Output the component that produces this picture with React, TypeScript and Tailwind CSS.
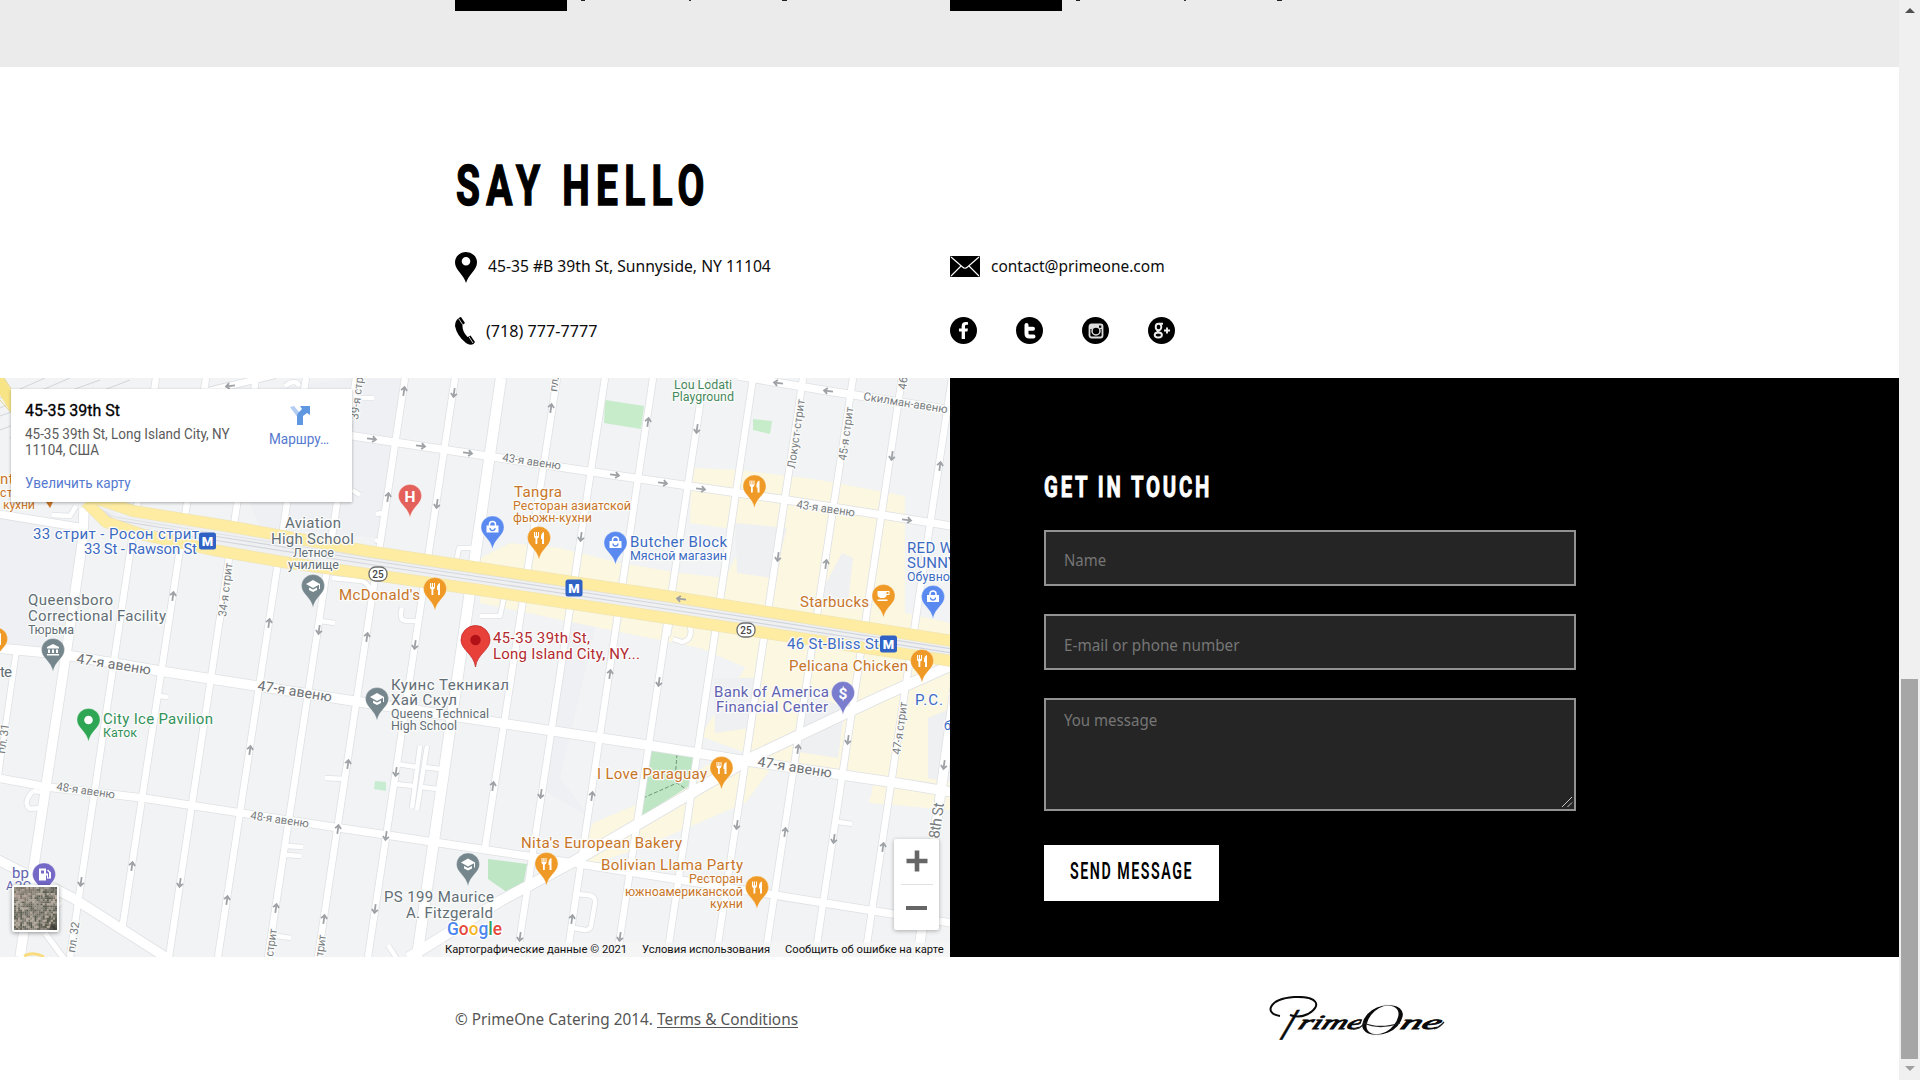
import React, { useLayoutEffect, useRef, useState } from "react";
import { FaFacebookF } from "react-icons/fa";

/** Condenses its text horizontally so that it fills the width of its box. */
function Fit({ className, textClass = "", children }: { className: string; textClass?: string; children: React.ReactNode }) {
  const box = useRef<HTMLSpanElement>(null);
  const inner = useRef<HTMLSpanElement>(null);
  const [scale, setScale] = useState(1);
  useLayoutEffect(() => {
    if (box.current && inner.current) setScale(box.current.offsetWidth / inner.current.offsetWidth);
  }, []);
  return (
    <span ref={box} className={"block shrink-0 whitespace-nowrap " + className}>
      <span ref={inner} className={"inline-block origin-left " + textClass} style={{ transform: `scaleX(${scale})` }}>
        {children}
      </span>
    </span>
  );
}

const ORANGE = "#c87528";
const SLATE = "#626e76";
const BLUE = "#3c6bc4";
const VIOLET = "#6163b2";
const GREEN = "#33925a";

type Road = [string, number];
const ROADS: Road[] = [
  ["M16 275L-2 400", 5],
  ["M84 130L83 160L65 283L20 579", 9],
  ["M156 0L70 579", 6],
  ["M206 0L122 552", 6],
  ["M256 0L169 579", 6],
  ["M306 0L218 579", 6],
  ["M356 0L268 579", 6],
  ["M405 0L318 579", 6],
  ["M455 0L368 579", 6],
  ["M501 0L417 579", 10],
  ["M557 0L485 470", 6],
  ["M605 0L517 579", 6],
  ["M653 0L567 579", 6],
  ["M704 0L617 579", 6],
  ["M753 0L667 579", 6],
  ["M803 0L716 579", 6],
  ["M853 0L765 579", 6],
  ["M902 0L815 579", 6],
  ["M952 0L865 579", 6],
  ["M998 0L918 579", 9],
  ["M200 15L275 -3", 6],
  ["M738 -2L828 13L952 32", 7],
  ["M340 56L420 68L480 77L613 97L787 122L952 148", 7],
  ["M-2 136L84 150", 7],
  ["M-2 270L60 276L160 293L360 324L480 342L647 367L747 383L897 405L952 414", 9],
  ["M-2 400L47 409L143 420L333 449L480 471L580 486L680 502L893 536L952 545", 7],
  ["M-2 482L73 520L170 582", 9],
  ["M952 287L880 319L753 379L573 484L500 523L408 580", 10],
  ["M60 524L48 540M45 555L65 582", 5],
  ["M33 413Q22 425 30 431L40 430M33 413L42 414", 4],
  ["M52 137L70 138L76 128", 4],
  ["M160 318L168 319", 4],
  ["M325 400L345 401", 4],
  ["M286 468L303 469M286 477L301 478M277 558L291 560", 4],
  ["M332 200L362 203Q370 206 370 215M320 243L335 245", 4],
  ["M402 230Q398 243 407 243L416 243", 4],
  ["M375 162L382 164M376 136L383 135M457 180L459 170L475 170M352 112L360 117", 4],
  ["M420 368L412 430M427 368L417 432M398 386L416 389M424 389L440 391M395 406L414 408M421 409L438 411", 4],
  ["M355 20L374 20M285 8Q296 0 299 8", 4],
  ["M576 516L588 517Q596 518 595 525L591 548Q590 552 585 552L574 550", 4],
  ["M480 238L500 238L504 220M670 246L668 258M690 248Q693 262 682 264L673 261", 4],
  ["M388 567L397 581M838 444L852 446", 4],
];

const ARROWS: [number, number, number][] = [
  [404, 13, 8], [454, 15, 188], [230, 8, 262], [372, 61, 98], [421, 68, 98], [468, 75, 98],
  [388, 119, 8], [437, 126, 188], [173, 218, 8], [269, 245, 8], [319, 252, 188], [367, 259, 8], [415, 267, 188],
  [551, 30, 8], [648, 44, 8], [697, 51, 188], [778, 5, 278], [828, 13, 278], [892, 78, 188], [940, 88, 8],
  [615, 97, 98], [663, 105, 98], [701, 111, 98], [907, 142, 98], [581, 159, 188], [778, 179, 188], [826, 186, 8],
  [681, 221, 278], [610, 296, 8], [659, 304, 188], [250, 372, 8], [348, 386, 8], [396, 394, 188],
  [132, 488, 8], [81, 504, 188], [180, 505, 188], [227, 522, 8], [338, 451, 8], [386, 458, 188],
  [276, 530, 8], [324, 541, 8], [375, 531, 188], [493, 408, 8], [541, 416, 188], [592, 418, 8],
  [737, 447, 188], [785, 454, 8], [798, 371, 8], [848, 362, 188], [834, 461, 188], [883, 469, 8],
  [944, 387, 188], [572, 541, 8], [520, 559, 188], [620, 559, 188],
];

// text, x, baseline, length, size, colour, rotation
type Label = [string, number, number, number, number, string, number?];
const LABELS: Label[] = [
  ["Lou Lodati", 674, 10.5, 58, 12.5, "#45885c"],
  ["Playground", 672, 23, 62, 12.5, "#45885c"],
  ["Aviation", 285, 150, 56, 15, SLATE],
  ["High School", 271, 166, 83, 15, SLATE],
  ["Летное", 293, 179, 41, 12.5, SLATE],
  ["училище", 288, 191, 51, 12.5, SLATE],
  ["McDonald's", 339, 222, 81, 15, ORANGE],
  ["Queensboro", 28, 227, 85, 15, SLATE],
  ["Correctional Facility", 28, 242.5, 138, 15, SLATE],
  ["Тюрьма", 28, 256, 46, 12.5, SLATE],
  ["33 стрит - Росон стрит", 33, 161, 166, 15, BLUE],
  ["33 St - Rawson St", 84, 176, 113, 15, BLUE],
  ["Tangra", 514, 119, 48, 15, ORANGE],
  ["Ресторан азиатской", 513, 132, 118, 12.5, ORANGE],
  ["фьюжн-кухни", 513, 144, 79, 12.5, ORANGE],
  ["Butcher Block", 630, 169, 97, 15, BLUE],
  ["Мясной магазин", 630, 182, 97, 12.5, BLUE],
  ["Starbucks", 800, 228.5, 69, 15, ORANGE],
  ["RED W", 907, 175, 46, 15, BLUE],
  ["SUNNY", 907, 190, 50, 15, BLUE],
  ["Обувно", 907, 203, 43, 12.5, BLUE],
  ["46 St-Bliss St", 787, 271, 92, 15, BLUE],
  ["Pelicana Chicken", 789, 293, 119, 15, ORANGE],
  ["45-35 39th St,", 493, 265, 97, 15, "#b32930"],
  ["Long Island City, NY...", 493, 281, 147, 15, "#b32930"],
  ["Bank of America", 714, 319, 115, 15, VIOLET],
  ["Financial Center", 716, 334, 112, 15, VIOLET],
  ["P.C. R", 915, 327, 43, 15, BLUE],
  ["б", 944, 352, 7, 12.5, BLUE],
  ["I Love Paraguay", 597, 401, 110, 15, ORANGE],
  ["Nita's European Bakery", 521, 470, 161, 15, ORANGE],
  ["Bolivian Llama Party", 601, 492, 142, 15, ORANGE],
  ["Ресторан", 689, 505, 54, 12.5, ORANGE],
  ["южноамериканской", 625, 518, 118, 12.5, ORANGE],
  ["кухни", 710, 530, 33, 12.5, ORANGE],
  ["PS 199 Maurice", 384, 524, 110, 15, SLATE],
  ["A. Fitzgerald", 406, 539.5, 87, 15, SLATE],
  ["City Ice Pavilion", 103, 346, 110, 15, GREEN],
  ["Каток", 103, 359, 34, 12.5, GREEN],
  ["Куинс Текникал", 391, 311.5, 118, 15, SLATE],
  ["Хай Скул", 391, 327, 66, 15, SLATE],
  ["Queens Technical", 391, 340, 98, 12.5, SLATE],
  ["High School", 391, 352, 66, 12.5, SLATE],
  ["bp", 12, 500, 17, 15, VIOLET],
  ["АЗС", 6, 512, 25, 12.5, VIOLET],
  ["te", 0, 299, 12, 15, SLATE],
  ["nte", 0, 106, 22, 15, ORANGE],
  ["сто", 0, 119, 20, 12.5, ORANGE],
  ["кухни", 3, 131, 32, 12.5, ORANGE],
  ["43-я авеню", 502, 83, 59, 11.5, "#777b80", 8.5],
  ["43-я авеню", 796, 130, 59, 11.5, "#777b80", 8.5],
  ["47-я авеню", 76, 285, 75, 14, "#6c7075", 9],
  ["47-я авеню", 257, 312, 75, 14, "#6c7075", 9],
  ["47-я авеню", 757, 388, 75, 14, "#6c7075", 9],
  ["48-я авеню", 56, 412, 59, 11.5, "#777b80", 8.5],
  ["48-я авеню", 250, 441, 59, 11.5, "#777b80", 8.5],
  ["Скилман-авеню", 863, 22, 85, 11.5, "#777b80", 9],
  ["34-я стрит", 226, 239, 54, 11.5, "#777b80", -83],
  ["39-я стр", 358, 42, 43, 11.5, "#777b80", -83],
  ["пл.", 557, 14, 15, 11.5, "#777b80", -83],
  ["Локуст-стрит", 795, 91, 70, 11.5, "#777b80", -82],
  ["45-я стрит", 846, 83, 54, 11.5, "#777b80", -82],
  ["46", 906, 12, 13, 11.5, "#777b80", -83],
  ["47-я стрит", 900, 377, 53, 11.5, "#777b80", -82],
  ["8th St", 939, 461, 36, 15, "#777b80", -82],
  ["пл. 31", 5, 376, 30, 11.5, "#777b80", -82],
  ["пл. 32", 75, 575, 31, 11.5, "#777b80", -82],
  ["стрит", 273, 579, 28, 11.5, "#777b80", -82],
  ["трит", 323, 579, 22, 11.5, "#777b80", -82],
];

type PinKind = "food" | "bag" | "school" | "cup" | "bank" | "dollar" | "dot" | "H" | "gas";
const PINS: [PinKind, number, number, string][] = [
  ["H", 410, 118, "#e4605a"],
  ["school", 313, 208, "#75868d"],
  ["food", 435, 211, "#ef9a26"],
  ["bank", 53, 272, "#75868d"],
  ["food", -4, 261, "#ef9a26"],
  ["bag", 492.5, 149.500, "#5a8af0"],
  ["food", 539, 160, "#ef9a26"],
  ["bag", 615.500, 165, "#5a8af0"],
  ["food", 754.500, 108.500, "#ef9a26"],
  ["cup", 883.500, 218, "#ef9a26"],
  ["bag", 933, 219, "#5a8af0"],
  ["food", 922, 283, "#ef9a26"],
  ["dollar", 843, 315, "#7a7ccd"],
  ["food", 721.500, 390, "#ef9a26"],
  ["food", 546.500, 486, "#ef9a26"],
  ["food", 757, 509.500, "#ef9a26"],
  ["dot", 88.500, 342, "#2fa653"],
  ["school", 377, 321, "#75868d"],
  ["school", 468, 486.500, "#75868d"],
  ["gas", 44, 496.500, "#7469c7"],
];

function PinGlyph({ kind }: { kind: PinKind }) {
  switch (kind) {
    case "food":
      return <path d="M-5 -6V-2Q-5 0 -3.500 0.500V6H-1.700V0.500Q0 0 0 -2V-6H-1V-2H-2V-6H-3.200V-2H-4V-6ZM5 -6Q1.500 -5 2 1H3V6H5Z" fill="#fff" />;
    case "bag":
      return (
        <g fill="none" stroke="#fff">
          <path d="M-3 -1V-3A3 3 0 0 1 3 -3V-1" strokeWidth="1.500" />
          <path d="M-6 -2H6V5H-6Z" fill="#fff" stroke="none" />
          <path d="M-2.500 0.500A2.500 2.500 0 0 0 2.500 0.500" stroke="#5a8af0" strokeWidth="1.300" />
        </g>
      );
    case "school":
      return <path d="M0 -6L-7 -2L0 2L6 -1.300V3H7V-2ZM-4 1.500V4L0 6L4 4V1.500L0 3.600Z" fill="#fff" />;
    case "bank":
      return <path d="M0 -6L-6 -3V-1.500H6V-3ZM-5 -0.500H-3V3H-5ZM-1 -0.500H1V3H-1ZM3 -0.500H5V3H3ZM-6 4H6V5.500H-6Z" fill="#fff" />;
    case "cup":
      return <path d="M-6 -5H6V-1H3V0Q2 2 0 2H-3Q-6 1 -6 -1ZM3 -4V-2H5V-4ZM-6 3.500H4V5H-6Z" fill="#fff" fillRule="evenodd" />;
    case "dot":
      return <circle r="4.300" fill="#fff" />;
    case "gas":
      return <path d="M-5 -6H2V-1H4V3H5V-2L3 -4L4 -5L7 -2V4H3V1H2V6H-5ZM-3 -4V-1H0V-4Z" fill="#fff" fillRule="evenodd" />;
    default:
      return (
        <text y="5.500" textAnchor="middle" fontSize="15.500" fontWeight="700" fill="#fff">
          {kind === "H" ? "H" : "$"}
        </text>
      );
  }
}

function MapDrawing() {
  return (
    <svg viewBox="0 0 950 579" className="block h-[579px] w-[950px] font-[Roboto,sans-serif]">
      <rect width="950" height="579" fill="#f1f3f4" />
      <path d="M210 20L350 0H405L380 160L260 150ZM570 240L600 230L560 400L590 440L540 410ZM0 140L80 155L60 270L0 265Z" fill="#eceef2" opacity=".6" />
      {/* commercial areas */}
      <g fill="#fcf7e1">
        <path d="M692 90L740 92L820 102L905 118L905 235L950 245V432L868 424L880 400L750 380L800 330L770 300L700 270L600 250L480 225V180L510 165L560 170L620 185L680 195L725 200L735 180L760 155L690 145Z" />
        <path d="M700 358L745 290L800 300L952 270V432L870 425L875 395L760 380Z" />
        <path d="M593 445L640 425L720 380L770 392L745 425L640 470L575 492Z" />
      </g>
      <path d="M735 145L787 150L774 200L737 195ZM842 175L853 180L848 225L818 220ZM714 300L760 300L750 350L715 355ZM810 315L845 330L838 380L798 374ZM928 340L952 330V405L928 400Z" fill="#eff0f1" />
      {/* parks */}
      <path d="M605 22L644 28L641 51L604 45ZM753 41L772 43L770 56L753 52Z" fill="#c6ecc9" />
      <path d="M649 371L694 378L689 408L642 438ZM488 481L527 486L523 508L508 515L488 501Z" fill="#bee6c4" />
      <path d="M375 403L386 404L386 413L374 411Z" fill="#c8ecd2" />
      <path d="M677 376L675 402M643 420L677 405L689 413" fill="none" stroke="#74937b" strokeDasharray="4 2" />
      {/* rail yard */}
      <path d="M0 30L70 0M0 38L100 2M0 52L130 2M0 20L45 0M10 60L230 4" stroke="#d3d5d8" fill="none" />
      {/* streets */}
      <g fill="none" strokeLinejoin="round">
        {ROADS.map(([d, w], i) => (
          <path key={i} d={d} stroke="#dfe1e4" strokeWidth={w + 2} />
        ))}
        {ROADS.map(([d, w], i) => (
          <path key={i} d={d} stroke="#fff" strokeWidth={w + 0.4} />
        ))}
        {/* boulevard and elevated line */}
        <path d="M92 126L115 145L213 160L367 184L480 201L680 231L952 273" stroke="#eff0f2" strokeWidth="17" />
        <path d="M92 126L115 142L213 158L367 182L480 199L680 229L952 271M92 126L115 147L213 162L367 186L480 203L680 233L952 275" stroke="#d2d6dc" strokeWidth="1.200" />
        <path d="M92 126L115 139L213 155L367 179L480 196L680 226L952 268" stroke="#dfe1e4" />
        <path d="M92 119L133 133L233 149L367 173L480 190L680 220L952 263M86 124L106 144L140 156L213 172L283 184L480 212L680 242L952 283" stroke="#f1e5b4" strokeWidth="12" />
        <path d="M92 119L133 133L233 149L367 173L480 190L680 220L952 263M86 124L106 144L140 156L213 172L283 184L480 212L680 242L952 283" stroke="#fdeca2" strokeWidth="10.500" />
        <path d="M-6 -4L20 38" stroke="#f7e486" strokeWidth="12" />
        <path d="M-2 20L18 42M4 0L24 30" stroke="#e5d48a" />
        <path d="M24 578Q34 573 44 579" stroke="#f8dc7d" strokeWidth="3" />
      </g>
      {ARROWS.map(([x, y, a], i) => (
        <path key={i} d="M0 5V-3M-3 -0.500L0 -4L3 -0.500" fill="none" stroke="#9ea1a5" strokeWidth="1.800" transform={`translate(${x} ${y}) rotate(${a})`} />
      ))}
      {LABELS.map(([t, x, y, len, size, color, rot], i) => (
        <text
          key={i}
          transform={`translate(${x} ${y}) rotate(${rot ?? 0})`}
          fontSize={size}
          textLength={len}
          fill={color}
          stroke="#fbfbfa"
          strokeWidth="2.600"
          strokeLinejoin="round"
          paintOrder="stroke"
        >
          {t}
        </text>
      ))}
      {[[378, 196], [746, 252]].map(([x, y]) => (
        <g key={x} transform={`translate(${x} ${y})`}>
          <rect x="-9" y="-7" width="18" height="14" rx="6.500" fill="#fff" stroke="#6d6d6d" strokeWidth="1.300" />
          <text y="3.700" textAnchor="middle" fontSize="10" fontWeight="500" fill="#444">25</text>
        </g>
      ))}
      {[[207.500, 163], [574, 210], [888.500, 266]].map(([x, y]) => (
        <g key={x} transform={`translate(${x} ${y})`}>
          <rect x="-8.500" y="-8.500" width="17" height="17" rx="2.500" fill="#2f62c4" />
          <text y="4.800" textAnchor="middle" fontSize="13" fontWeight="900" fill="#fff">M</text>
        </g>
      ))}
      <path d="M46 124L50 130L53 124Z" fill={ORANGE} />
      {PINS.map(([kind, x, y, color], i) => (
        <g key={i} transform={`translate(${x} ${y})`}>
          <path d="M0 21.500C-2 11 -11.500 8 -11.500 0A11.500 11.500 0 0 1 11.500 0C11.500 8 2 11 0 21.500Z" fill={color} stroke="#fff" strokeOpacity=".5" strokeWidth=".6" />
          <PinGlyph kind={kind} />
        </g>
      ))}
      <path d="M475.500 289C474 276 461 272 461 262A14.500 14.500 0 0 1 490 262C490 272 477 276 475.500 289Z" fill="#e8413a" stroke="#c5282a" strokeWidth=".8" />
      <circle cx="475.500" cy="262" r="5.200" fill="#b01217" />
      <text x="447" y="556.500" fontSize="18.500" fontWeight="500" textLength="55" lengthAdjust="spacingAndGlyphs" stroke="#fff" strokeWidth="2.500" paintOrder="stroke">
        <tspan fill="#4a86ee">G</tspan>
        <tspan fill="#e5493d">o</tspan>
        <tspan fill="#f3b724">o</tspan>
        <tspan fill="#4a86ee">g</tspan>
        <tspan fill="#35a355">l</tspan>
        <tspan fill="#e5493d">e</tspan>
      </text>
      <rect x="441" y="564" width="509" height="15" fill="#f5f5f5" opacity=".75" />
    </svg>
  );
}

const SAT_TONES = ["#8d877b", "#6c6a60", "#a59c8f", "#575a4d", "#7c7b70", "#b5a99c", "#666358"];

function Satellite() {
  const cells = [];
  for (let r = 0; r < 21; r++) {
    for (let c = 0; c < 21; c++) {
      const n = (r * 37 + c * 91 + r * c * 13 + ((r * r) % 11) * 5 + ((c * c * c) % 17)) % SAT_TONES.length;
      cells.push(<rect key={`${r}-${c}`} x={c * 2} y={r * 2} width="2.200" height="2.200" fill={SAT_TONES[n]} />);
    }
  }
  return (
    <svg viewBox="0 0 42 42" className="h-full w-full">
      {cells}
      <path d="M0 0H24L12 16L0 10Z" fill="#b59f93" opacity=".35" />
      <path d="M8 42L14 0M22 42L27 0M35 42L40 0M0 12L42 18M0 32L42 37" stroke="#b5ab9e" strokeWidth=".7" opacity=".7" />
      <path d="M36 36H42V42H34Z" fill="#33352e" opacity=".7" />
    </svg>
  );
}

function MapPanel() {
  return (
    <div className="relative h-[579px] w-[950px] shrink-0 overflow-hidden font-[Roboto,sans-serif]">
      <MapDrawing />
      <div className="absolute left-[11px] top-[11px] flex h-[113px] w-[341px] bg-white pl-[14px] shadow-[0_1px_3px_rgba(0,0,0,0.3)]">
        <div className="flex w-[240px] flex-col">
          <Fit className="mt-[12px] h-5 w-[95px] text-[16px] leading-5 text-black" textClass="[-webkit-text-stroke:0.3px_black]">45-35 39th St</Fit>
          <Fit className="mt-[5px] h-4 w-[205px] text-[14px] leading-4 text-[#5b5b5b]">45-35 39th St, Long Island City, NY</Fit>
          <Fit className="h-4 w-[74px] text-[14px] leading-4 text-[#5b5b5b]">11104, США</Fit>
          <Fit className="mt-[17px] h-4 w-[106px] text-[14px] leading-4 text-[#5579cf]">Увеличить карту</Fit>
        </div>
        <div className="flex flex-1 flex-col pl-[4px]">
          <svg viewBox="0 0 20 20" className="mt-[16px] ml-[21px] h-5 w-5">
            <path d="M0 2L4 1L10 8L8 13Z" fill="#b4cdf2" />
            <path d="M7 20V11Q7 9 9 7L12 4L10 1H20V10L17 8L13 11V20Z" fill="#5f98e0" />
          </svg>
          <Fit className="mt-[6px] h-4 w-[60px] text-[14px] leading-4 text-[#5579cf]">Маршру…</Fit>
        </div>
      </div>
      <div className="absolute left-[12px] top-[507px] h-[47px] w-[47px] rounded-[2px] border-[2px] border-white bg-white shadow-[0_1px_4px_rgba(0,0,0,0.4)]">
        <Satellite />
      </div>
      <div className="absolute left-[894px] top-[461px] flex h-[91px] w-[45px] flex-col items-center rounded-[2px] bg-white shadow-[0_1px_4px_rgba(0,0,0,0.3)]">
        <svg viewBox="0 0 22 22" className="mt-[11px] h-[22px] w-[22px]">
          <path d="M8.700 0.500H13.300V8.700H21.500V13.300H13.300V21.500H8.700V13.300H0.500V8.700H8.700Z" fill="#666" />
        </svg>
        <div className="mt-[12px] h-px w-[32px] bg-[#e0e0e0]" />
        <div className="mt-[21px] h-[4px] w-[21px] bg-[#666]" />
      </div>
      <div className="absolute left-[445px] top-[565px] flex h-[14px] gap-[15px] text-[11px] leading-[14px] text-[#111]">
        <Fit className="w-[182px]">Картографические данные © 2021</Fit>
        <Fit className="w-[128px]">Условия использования</Fit>
        <Fit className="w-[159px]">Сообщить об ошибке на карте</Fit>
      </div>
    </div>
  );
}

function ContactForm() {
  return (
    <div className="flex flex-1 flex-col items-start bg-black pt-[95px] pl-[94px]">
      <Fit
        className="h-[29px] w-[168px] font-[Roboto,sans-serif] text-[29px] leading-[29px] font-bold tracking-[4px] text-white"
        textClass="[-webkit-text-stroke:0.9px_white]"
      >
        GET IN TOUCH
      </Fit>
      <div className="mt-[28px] h-[56px] w-[532px] border-2 border-[#929292] bg-[#252525] pt-[16px] pl-[18px]">
        <Fit className="h-6 w-[42px] text-[16px] leading-6 text-[#757575]">Name</Fit>
      </div>
      <div className="mt-[28px] h-[56px] w-[532px] border-2 border-[#929292] bg-[#252525] pt-[17px] pl-[18px]">
        <Fit className="h-6 w-[176px] text-[16px] leading-6 text-[#757575]">E-mail or phone number</Fit>
      </div>
      <div className="mt-[28px] flex h-[113px] w-[532px] items-end justify-between border-2 border-[#929292] bg-[#252525] pl-[18px]">
        <Fit className="mb-auto mt-[8px] h-6 w-[93px] text-[16px] leading-6 text-[#757575]">You message</Fit>
        <svg viewBox="0 0 12 12" className="mr-px mb-px h-3 w-3">
          <path d="M1 11L11 1M6.500 11L11 6.500" stroke="#c8c8c8" />
        </svg>
      </div>
      <button className="mt-[34px] flex h-[56px] w-[175px] items-center bg-white pb-[3px] pl-[26px]">
        <Fit className="h-[23px] w-[123px] text-left font-[Roboto,sans-serif] text-[23px] leading-[23px] font-semibold tracking-[2.500px] text-black">
          SEND MESSAGE
        </Fit>
      </button>
    </div>
  );
}

function SocialIcons() {
  return (
    <div className="flex gap-[39px] pb-px text-white">
      <span className="flex h-[27px] w-[27px] items-center justify-center rounded-full bg-black">
        <FaFacebookF size={17} />
      </span>
      <span className="flex h-[27px] w-[27px] items-center justify-center rounded-full bg-black">
        <svg viewBox="0 0 27 27" className="h-[27px] w-[27px]">
          <path d="M10.500 8V16.500Q10.500 19.500 13.500 19.500H17.500M10.500 11.700H17" fill="none" stroke="#fff" strokeWidth="4" strokeLinecap="round" strokeLinejoin="round" />
        </svg>
      </span>
      <span className="flex h-[27px] w-[27px] items-center justify-center rounded-full bg-black">
        <svg viewBox="0 0 16 16" className="h-4 w-4">
          <rect x="1.500" y="1.500" width="13" height="13" rx="2" fill="none" stroke="#ddd" strokeWidth="1.800" />
          <path d="M1 3Q1 1 3 1H13Q15 1 15 3V6H1Z" fill="#ddd" />
          <circle cx="8" cy="8" r="4" fill="#000" stroke="#ddd" strokeWidth="1.500" />
          <rect x="11" y="2.500" width="2.300" height="2.300" fill="#000" />
        </svg>
      </span>
      <span className="flex h-[27px] w-[27px] items-center justify-center rounded-full bg-black">
        <svg viewBox="0 0 27 27" className="h-[27px] w-[27px]">
          <g fill="none" stroke="#eee" strokeWidth="1.900">
            <ellipse cx="10.500" cy="10" rx="2.800" ry="3.200" />
            <ellipse cx="10.300" cy="18" rx="3.600" ry="2.500" />
            <path d="M10 13Q8.500 14.500 11.500 15.700M11 6.800H15" />
            <path d="M16 13.500H22M19 10.500V16.500" />
          </g>
        </svg>
      </span>
    </div>
  );
}

function ContactInfo() {
  return (
    <section className="h-[311px] bg-white pt-[91px] pl-[455px] text-[#0c0c0c]">
      <Fit
        className="h-14 w-[255px] pl-px font-[Roboto,sans-serif] text-[56px] leading-[56px] font-bold tracking-[9px] text-black"
        textClass="[-webkit-text-stroke:1.500px_black]"
      >
        SAY HELLO
      </Fit>
      <div className="mt-[33px] flex h-[38px]">
        <div className="flex w-[495px] items-center">
          <svg viewBox="0 0 22 31" className="mt-[2px] h-[31px] w-[22px]">
            <path fillRule="evenodd" d="M11 31C9 23 0 18 0 10.500A11 10.500 0 0 1 22 10.500C22 18 13 23 11 31ZM11 5A4.300 4.300 0 1 0 11 13.600A4.300 4.300 0 1 0 11 5Z" />
          </svg>
          <Fit className="ml-[11px] w-[283px] text-[16px] leading-6">45-35 #B 39th St, Sunnyside, NY 11104</Fit>
        </div>
        <div className="flex items-center">
          <svg viewBox="0 0 30 21" className="mt-px h-[21px] w-[30px]">
            <rect width="30" height="21" rx="1" />
            <path d="M1 1L12.500 11Q15 13.500 17.500 11L29 1M1 20L11 10M29 20L19 10" fill="none" stroke="#fff" strokeWidth="1.100" />
          </svg>
          <Fit className="ml-[11px] w-[174px] text-[16px] leading-6">contact@primeone.com</Fit>
        </div>
      </div>
      <div className="mt-[27px] flex h-[38px]">
        <div className="flex w-[495px] items-center">
          <svg viewBox="0 0 20 28" className="h-[28px] w-[20px]">
            <path d="M4.500 0.500L6 0L10 6L7.500 8Q7 14 12.500 20L15.500 18.500L20 25L18.500 27Q15 29 11 26Q2 19 0 9Q0 3 4.500 0.500Z" />
            <path d="M3.600 1.500L7.800 7.800M13.800 19.400L18 26" stroke="#fff" strokeWidth=".8" />
          </svg>
          <Fit className="ml-[11px] w-[111px] text-[16px] leading-6">(718) 777-7777</Fit>
        </div>
        <div className="flex items-center">
          <SocialIcons />
        </div>
      </div>
    </section>
  );
}

/** Signature wordmark: slanted lettering with a pen flourish over the initial. */
function Wordmark() {
  return (
    <svg viewBox="0 0 176 46" className="h-[46px] w-[176px] font-['Liberation_Serif',serif] italic">
      <path d="M11 20C-5 18 -1 3 25 1C48 0 54 9 39 18C33 21 26 21 21 19" fill="none" stroke="#0a0a0a" strokeWidth="2" />
      <g fill="#0a0a0a" stroke="#0a0a0a" strokeWidth=".8">
        <text fontSize="44" fontWeight="700" transform="translate(13 43) scale(.8 1) skewX(-12)">/</text>
        <text fontSize="20" transform="translate(28 33) skewX(-24)" textLength="64" lengthAdjust="spacingAndGlyphs">rime</text>
        <text fontSize="46" stroke="#fff" strokeWidth="1.200" transform="translate(87 39) skewX(-12)" textLength="45" lengthAdjust="spacingAndGlyphs">O</text>
        <text fontSize="20" transform="translate(130 33) skewX(-24)" textLength="40" lengthAdjust="spacingAndGlyphs">ne</text>
      </g>
      <path d="M84 33Q92 33 95 27Q110 34 131 27M165 33Q171 31 175 26" fill="none" stroke="#222" strokeWidth="1.300" />
    </svg>
  );
}

function Footer() {
  return (
    <footer className="flex h-[123px] items-center bg-white pl-[455px] text-[17px] leading-6 text-[#555]">
      <Fit className="w-[198px]">© PrimeOne Catering 2014.</Fit>
      <Fit className="ml-[4px] w-[141px]" textClass="underline decoration-1 underline-offset-2">
        Terms &amp; Conditions
      </Fit>
      <div className="ml-[471px]">
        <Wordmark />
      </div>
    </footer>
  );
}

function ServiceTail() {
  return (
    <div className="flex w-[495px] items-start">
      <div className="h-[11px] w-[112px] bg-black" />
      <div className="ml-[14px] h-px w-[4px] bg-[#222]" />
      <div className="ml-[104px] h-px w-[2px] bg-[#333]" />
      <div className="ml-[91px] h-px w-[5px] bg-[#222]" />
    </div>
  );
}

export default function App() {
  return (
    <div className="flex h-[1080px] w-[1920px] overflow-hidden bg-white font-['Noto_Sans','Open_Sans',sans-serif]">
      <main className="w-[1899px] shrink-0">
        <div className="flex h-[67px] bg-[#ebebeb] pl-[455px]">
          <ServiceTail />
          <ServiceTail />
        </div>
        <ContactInfo />
        <section className="flex h-[579px]">
          <MapPanel />
          <ContactForm />
        </section>
        <Footer />
      </main>
      <div className="flex w-[21px] flex-col items-center bg-[#f0f0f0]">
        <svg viewBox="0 0 10 5" className="mt-[8px] h-[5px] w-[10px]">
          <path d="M0 5L5 0L10 5Z" fill="#505050" />
        </svg>
        <div className="mt-[666px] h-[380px] w-[17px] bg-[#a6a6a6]" />
        <svg viewBox="0 0 10 5" className="mt-[7px] h-[5px] w-[10px]">
          <path d="M0 0L5 5L10 0Z" fill="#a0a0a0" />
        </svg>
      </div>
    </div>
  );
}
